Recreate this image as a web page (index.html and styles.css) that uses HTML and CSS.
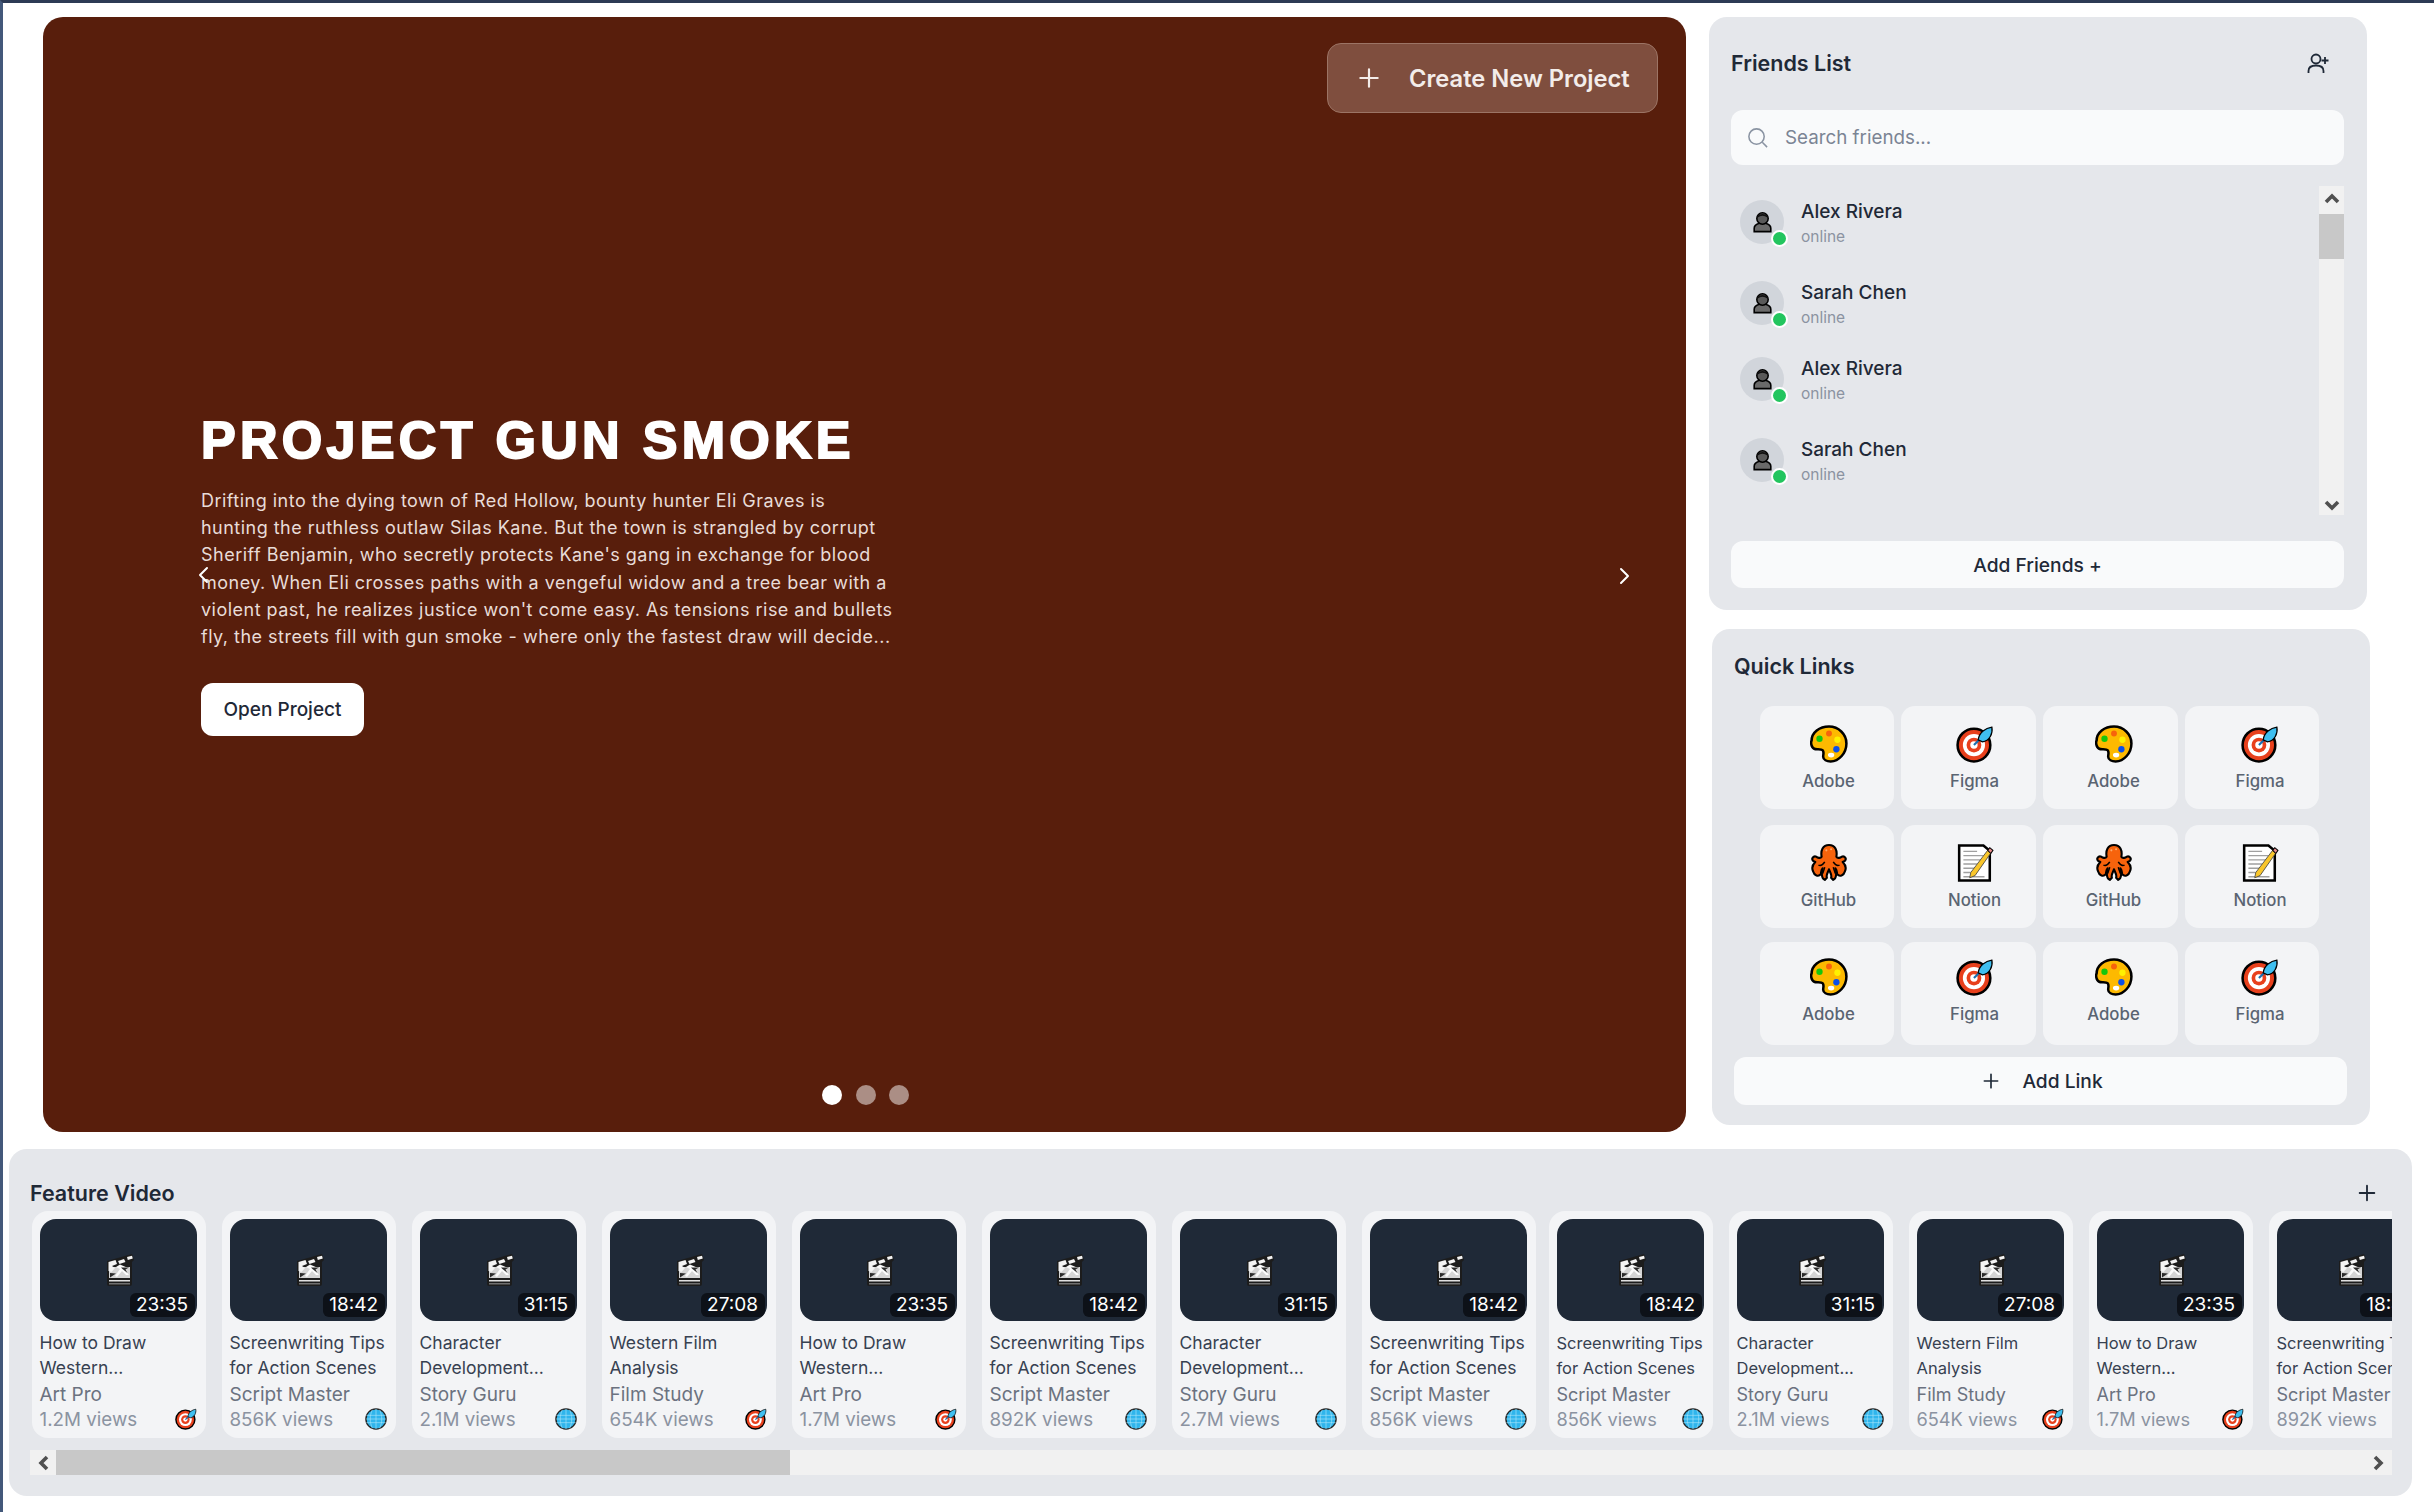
FILE: index.html
```html
<!DOCTYPE html>
<html lang="en">
<head>
  <meta charset="UTF-8" />
  <title>Dashboard</title>
  <link rel="stylesheet" href="styles.css">
</head>
<body>
  <svg class="defs" width="0" height="0">
    <symbol id="i-palette" viewBox="0 0 36 36">
      <path d="M1.500 15C1.500 7 9 1.500 18 1.500c9 0 16.500 7 16.500 16 0 9-7 17-15 17-3.500 0-7-1.500-7-4.500 0-3 1-4-.5-6-1.500-2-6-.5-8-1.500-2-1-3-3-3-7z" fill="#fdb900" stroke="#000" stroke-width="2.400"/>
      <circle cx="9" cy="13" r="3" fill="#16c60c"/><circle cx="18" cy="8" r="2.800" fill="#f7630c"/>
      <circle cx="26" cy="14" r="3" fill="#fff100"/><circle cx="25" cy="23" r="3" fill="#0c4fe8"/>
      <ellipse cx="20" cy="28.500" rx="3" ry="2.200" fill="#fff"/>
    </symbol>
    <symbol id="i-target" viewBox="0 0 36 36">
      <circle cx="17" cy="19" r="15.500" fill="#e8401c" stroke="#000" stroke-width="2.400"/>
      <circle cx="17" cy="19" r="10.500" fill="#fff"/><circle cx="17" cy="19" r="7" fill="#e8401c"/><circle cx="17" cy="19" r="3.500" fill="#fff"/>
      <path d="M17 19l6-6" stroke="#1a6fb0" stroke-width="2"/>
      <path d="M21 14c1-7 7-11 13-12 1 6-2 13-9 14z" fill="#3fbff0" stroke="#000" stroke-width="1.200"/>
    </symbol>
    <symbol id="i-octopus" viewBox="0 0 36 36">
      <g fill="#f7630c" stroke="#000" stroke-width="2" stroke-linejoin="round">
        <path d="M18 1c6 0 8 5 7 11 1 2 4 1 5 0 3-1 5 2 3 4l-2 1c2 2 4 5 2 9-1 4-5 5-7 3-1-2 0-4-2-6 1 4 2 9-2 11l-2-2c1-3-1-5-2-8-1 3-3 5-2 8l-2 2c-4-2-3-7-2-11-2 2-1 4-2 6-2 2-6 1-7-3-2-4 0-7 2-9l-2-1c-2-2 0-5 3-4 1 1 4 2 5 0-1-6 1-11 7-11z"/>
      </g>
      <path d="M8 20c2 1 4 0 6-3M28 20c-2 1-4 0-6-3M14 22l-2 6M22 22l2 6" stroke="#000" stroke-width="1.400" fill="none"/>
      <circle cx="15.500" cy="6" r="1" fill="#ffa869"/><circle cx="20" cy="5" r="1" fill="#ffa869"/>
    </symbol>
    <symbol id="i-memo" viewBox="0 0 36 36">
      <path d="M3 1.500h23l6 5v28H3z" fill="#fff" stroke="#000" stroke-width="2.400"/>
      <path d="M7 7h13M7 11h19M7 15h19M7 19h13M7 23h11M7 27h7M7 31h20" stroke="#a0a0a0" stroke-width="1.300"/>
      <path d="M14 27L30 6l3 2.500L18 30l-5 2z" fill="#f9c62b" stroke="#444" stroke-width=".8"/>
      <path d="M30 6l2-2.500 3 2.500-2 3z" fill="#e88a8a" stroke="#000" stroke-width="1"/>
    </symbol>
    <symbol id="i-clapper" viewBox="0 0 28 32">
      <path d="M1 7l25-7 2 6-2 2v22a2 2 0 0 1-2 2H3a2 2 0 0 1-2-2z" fill="#1c1c1c"/>
      <path d="M3 13h21v11H3z" fill="#d4d4d4"/>
      <path d="M3 26h21v1.500H3z" fill="#e0e0e0"/>
      <path d="M3 29h21v1.500H3z" fill="#6e6e6e"/>
      <path d="M2.500 8l7-2 1.500 4-5 2 3 2-3.500 4-3-1zM12 7l6-2 1.500 3-6 2zM21 3l5-1.300.8 2.800-5 1.500z" fill="#f4f4f4"/>
      <path d="M10 13l4-2.500 8 3.500-3 2 4 5h-3l-4-4-5 6-2-1 5-7z" fill="#fafafa"/>
      <path d="M15 13.500h8l-3.500 2 2 3.500-5-4zM4 19l6 .5-6 4z" fill="#2a2a2a"/>
    </symbol>
    <symbol id="i-globe" viewBox="0 0 24 24">
      <circle cx="12" cy="12" r="11" fill="#2fb5ec" stroke="#222" stroke-width="1.500"/>
      <path d="M1.500 8h21M1.500 12h21M1.500 16h21M8 2c-3 6-3 14 0 20M16 2c3 6 3 14 0 20M12 1v22" stroke="#a6e3f8" stroke-width=".7" fill="none"/>
    </symbol>
    <symbol id="i-person" viewBox="0 0 24 24">
      <path d="M2.500 23v-4c0-3 3-4.500 6-5.500h7c3 1 6 2.500 6 5.500v4z" fill="#6a6a6a" stroke="#000" stroke-width="1.800"/>
      <circle cx="12" cy="8" r="6.500" fill="#5a5a5a" stroke="#000" stroke-width="1.800"/>
      <path d="M6.500 6c2-3 9-3 11 0" stroke="#111" stroke-width="2" fill="none"/>
    </symbol>
    <symbol id="i-plus" viewBox="0 0 24 24">
      <path d="M12 4v16M4 12h16" stroke="currentColor" stroke-width="2" stroke-linecap="round"/>
    </symbol>
  </svg>

  <div class="top">
    <section class="hero">
      <button class="create-btn"><svg class="create-plus"><use href="#i-plus"/></svg>Create New Project</button>
      <svg class="arrow arrow-left" viewBox="0 0 24 24"><path d="M15 5l-7 7 7 7"/></svg>
      <svg class="arrow arrow-right" viewBox="0 0 24 24"><path d="M9 5l7 7-7 7"/></svg>
      <h1>PROJECT GUN SMOKE</h1>
      <p>Drifting into the dying town of Red Hollow, bounty hunter Eli Graves is<br>hunting the ruthless outlaw Silas Kane. But the town is strangled by corrupt<br>Sheriff Benjamin, who secretly protects Kane's gang in exchange for blood<br>money. When Eli crosses paths with a vengeful widow and a tree bear with a<br>violent past, he realizes justice won't come easy. As tensions rise and bullets<br>fly, the streets fill with gun smoke - where only the fastest draw will decide...</p>
      <button class="open-btn">Open Project</button>
      <div class="dots"><span class="dot active"></span><span class="dot"></span><span class="dot"></span></div>
    </section>

    <div class="side">
      <section class="friends">
        <div class="panel-head">
          <h2>Friends List</h2>
          <svg class="add-friend" viewBox="0 0 24 24"><circle cx="10" cy="8" r="4.500"/><path d="M2.500 22v-2c0-3.500 3-5.500 7.500-5.500s7.500 2 7.500 5.500v2M19 6v7M15.500 9.500h7"/></svg>
        </div>
        <div class="search">
          <svg class="search-icon" viewBox="0 0 24 24"><circle cx="11" cy="11" r="8"/><path d="M17 17l5 5"/></svg>
          <span>Search friends...</span>
        </div>
        <div class="list-wrap">
          <ul class="friend-list">
            <li class="friend f1"><div class="avatar"><svg><use href="#i-person"/></svg><span class="status"></span></div><div><div class="name">Alex Rivera</div><div class="state">online</div></div></li>
            <li class="friend f2"><div class="avatar"><svg><use href="#i-person"/></svg><span class="status"></span></div><div><div class="name">Sarah Chen</div><div class="state">online</div></div></li>
            <li class="friend f3"><div class="avatar"><svg><use href="#i-person"/></svg><span class="status"></span></div><div><div class="name">Alex Rivera</div><div class="state">online</div></div></li>
            <li class="friend f4"><div class="avatar"><svg><use href="#i-person"/></svg><span class="status"></span></div><div><div class="name">Sarah Chen</div><div class="state">online</div></div></li>
          </ul>
          <div class="vbar">
            <svg class="sb-arrow" viewBox="0 0 12 12"><path d="M2 8l4-4 4 4"/></svg>
            <div class="vthumb"></div>
            <svg class="sb-arrow sb-end" viewBox="0 0 12 12"><path d="M2 4l4 4 4-4"/></svg>
          </div>
        </div>
        <button class="wide-btn add-friends">Add Friends +</button>
      </section>

      <section class="links">
        <h2>Quick Links</h2>
        <div class="link-grid">
          <a class="link"><svg><use href="#i-palette"/></svg>Adobe</a>
          <a class="link"><svg><use href="#i-target"/></svg>Figma</a>
          <a class="link"><svg><use href="#i-palette"/></svg>Adobe</a>
          <a class="link"><svg><use href="#i-target"/></svg>Figma</a>
          <a class="link"><svg><use href="#i-octopus"/></svg>GitHub</a>
          <a class="link"><svg><use href="#i-memo"/></svg>Notion</a>
          <a class="link"><svg><use href="#i-octopus"/></svg>GitHub</a>
          <a class="link"><svg><use href="#i-memo"/></svg>Notion</a>
          <a class="link"><svg><use href="#i-palette"/></svg>Adobe</a>
          <a class="link"><svg><use href="#i-target"/></svg>Figma</a>
          <a class="link"><svg><use href="#i-palette"/></svg>Adobe</a>
          <a class="link"><svg><use href="#i-target"/></svg>Figma</a>
        </div>
        <button class="wide-btn add-link"><svg><use href="#i-plus"/></svg>Add Link</button>
      </section>
    </div>
  </div>

  <section class="feature">
    <div class="feature-head">
      <h2>Feature Video</h2>
      <svg class="feature-plus"><use href="#i-plus"/></svg>
    </div>
    <div class="videos">
      <article class="video"><div class="thumb"><svg><use href="#i-clapper"/></svg><span class="time">23:35</span></div><div class="v-title">How to Draw Western...</div><div class="v-author">Art Pro</div><div class="v-meta"><span>1.2M views</span><svg><use href="#i-target"/></svg></div></article>
      <article class="video"><div class="thumb"><svg><use href="#i-clapper"/></svg><span class="time">18:42</span></div><div class="v-title">Screenwriting Tips for Action Scenes</div><div class="v-author">Script Master</div><div class="v-meta"><span>856K views</span><svg><use href="#i-globe"/></svg></div></article>
      <article class="video"><div class="thumb"><svg><use href="#i-clapper"/></svg><span class="time">31:15</span></div><div class="v-title">Character Development...</div><div class="v-author">Story Guru</div><div class="v-meta"><span>2.1M views</span><svg><use href="#i-globe"/></svg></div></article>
      <article class="video"><div class="thumb"><svg><use href="#i-clapper"/></svg><span class="time">27:08</span></div><div class="v-title">Western Film Analysis</div><div class="v-author">Film Study</div><div class="v-meta"><span>654K views</span><svg><use href="#i-target"/></svg></div></article>
      <article class="video"><div class="thumb"><svg><use href="#i-clapper"/></svg><span class="time">23:35</span></div><div class="v-title">How to Draw Western...</div><div class="v-author">Art Pro</div><div class="v-meta"><span>1.7M views</span><svg><use href="#i-target"/></svg></div></article>
      <article class="video"><div class="thumb"><svg><use href="#i-clapper"/></svg><span class="time">18:42</span></div><div class="v-title">Screenwriting Tips for Action Scenes</div><div class="v-author">Script Master</div><div class="v-meta"><span>892K views</span><svg><use href="#i-globe"/></svg></div></article>
      <article class="video"><div class="thumb"><svg><use href="#i-clapper"/></svg><span class="time">31:15</span></div><div class="v-title">Character Development...</div><div class="v-author">Story Guru</div><div class="v-meta"><span>2.7M views</span><svg><use href="#i-globe"/></svg></div></article>
      <article class="video"><div class="thumb"><svg><use href="#i-clapper"/></svg><span class="time">18:42</span></div><div class="v-title">Screenwriting Tips for Action Scenes</div><div class="v-author">Script Master</div><div class="v-meta"><span>856K views</span><svg><use href="#i-globe"/></svg></div></article>
      <article class="video narrow"><div class="thumb"><svg><use href="#i-clapper"/></svg><span class="time">18:42</span></div><div class="v-title">Screenwriting Tips for Action Scenes</div><div class="v-author">Script Master</div><div class="v-meta"><span>856K views</span><svg><use href="#i-globe"/></svg></div></article>
      <article class="video narrow"><div class="thumb"><svg><use href="#i-clapper"/></svg><span class="time">31:15</span></div><div class="v-title">Character Development...</div><div class="v-author">Story Guru</div><div class="v-meta"><span>2.1M views</span><svg><use href="#i-globe"/></svg></div></article>
      <article class="video narrow"><div class="thumb"><svg><use href="#i-clapper"/></svg><span class="time">27:08</span></div><div class="v-title">Western Film Analysis</div><div class="v-author">Film Study</div><div class="v-meta"><span>654K views</span><svg><use href="#i-target"/></svg></div></article>
      <article class="video narrow"><div class="thumb"><svg><use href="#i-clapper"/></svg><span class="time">23:35</span></div><div class="v-title">How to Draw Western...</div><div class="v-author">Art Pro</div><div class="v-meta"><span>1.7M views</span><svg><use href="#i-target"/></svg></div></article>
      <article class="video narrow"><div class="thumb"><svg><use href="#i-clapper"/></svg><span class="time">18:42</span></div><div class="v-title">Screenwriting Tips for Action Scenes</div><div class="v-author">Script Master</div><div class="v-meta"><span>892K views</span><svg><use href="#i-globe"/></svg></div></article>
    </div>
    <div class="hbar">
      <svg class="sb-arrow" viewBox="0 0 12 12"><path d="M8 2L4 6l4 4"/></svg>
      <div class="hthumb"></div>
      <svg class="sb-arrow sb-end" viewBox="0 0 12 12"><path d="M4 2l4 4-4 4"/></svg>
    </div>
  </section>
</body>
</html>
```
FILE: styles.css
```css
* {
  box-sizing: border-box;
}
html, body {
  height: 100%;
}
body {
  margin: 0;
  background: #fff;
  border-top: 3px solid #2d3b55;
  border-left: 3px solid #43587a;
  font-family: Inter, "Liberation Sans", sans-serif;
  color: #1f2937;
  overflow: hidden;
}
.defs {
  position: absolute;
}
button {
  font-family: inherit;
  border: none;
  cursor: pointer;
}
h2 {
  margin: 0;
  font-size: 21.500px;
  font-weight: 600;
  color: #1f2937;
}

.top {
  display: flex;
  gap: 23px;
  padding: 14px 0 0 40px;
}

/* hero */
.hero {
  position: relative;
  width: 1643px;
  height: 1115px;
  flex: none;
  display: flex;
  flex-direction: column;
  align-items: flex-start;
  justify-content: center;
  padding: 0 0 4px 158px;
  background: #581e0c;
  border-radius: 20px;
  color: #fff;
}
.hero h1 {
  margin: 0 0 16px;
  font-family: "Liberation Sans", Arial, sans-serif;
  font-size: 52px;
  line-height: 62px;
  font-weight: 700;
  letter-spacing: 4.300px;
  -webkit-text-stroke: 2px #fff;
}
.hero p {
  margin: 0 0 33px;
  font-size: 18px;
  line-height: 27.2px;
  letter-spacing: .48px;
  white-space: nowrap;
  color: #e8dcd8;
}
.open-btn {
  width: 163px;
  height: 53px;
  background: #fff;
  border-radius: 12px;
  font-size: 19px;
  font-weight: 500;
  color: #1f2937;
}
.create-btn {
  position: absolute;
  top: 26px;
  right: 28px;
  width: 331px;
  height: 70px;
  display: flex;
  align-items: center;
  padding-left: 28px;
  background: #7f4e3e;
  border: 1.500px solid #9c7465;
  border-radius: 14px;
  font-size: 23.700px;
  font-weight: 600;
  color: #f3ece9;
}
.create-plus {
  width: 26px;
  height: 26px;
  margin-right: 27px;
}
.arrow {
  position: absolute;
  width: 24px;
  height: 24px;
  fill: none;
  stroke: #fff;
  stroke-width: 2;
  stroke-linecap: round;
  stroke-linejoin: round;
}
.arrow-left {
  left: 149px;
  top: 546px;
}
.arrow-right {
  right: 50px;
  top: 547px;
}
.dots {
  position: absolute;
  left: 779px;
  bottom: 27px;
  display: flex;
  gap: 13.500px;
}
.dot {
  width: 20px;
  height: 20px;
  border-radius: 50%;
  background: #ab8e85;
}
.dot.active {
  background: #fff;
}

/* right column */
.side {
  width: 661px;
  flex: none;
}
.friends {
  width: 658px;
  height: 593px;
  padding: 0 23px 0 22px;
  background: #e5e7eb;
  border-radius: 18px;
}
.panel-head {
  height: 93px;
  display: flex;
  align-items: center;
  justify-content: space-between;
  padding-bottom: 2px;
}
.add-friend {
  width: 24px;
  height: 24px;
  margin-right: 14px;
  fill: none;
  stroke: #1f2937;
  stroke-width: 1.800;
}
.search {
  height: 55px;
  display: flex;
  align-items: center;
  gap: 16px;
  padding-left: 15px;
  background: #f9fafb;
  border-radius: 12px;
  font-size: 18.800px;
  color: #7b8494;
}
.search-icon {
  width: 23px;
  height: 23px;
  fill: none;
  stroke: #8a93a2;
  stroke-width: 1.600;
}
.list-wrap {
  display: flex;
  justify-content: space-between;
  height: 329px;
  margin: 21px 0 26px;
}
.friend-list {
  list-style: none;
  margin: 0;
  padding: 0 0 0 9px;
}
.friend {
  display: flex;
  align-items: center;
  gap: 17px;
  height: 44px;
}
.f1 { margin-top: 14px; }
.f2 { margin-top: 37px; }
.f3 { margin-top: 32px; }
.f4 { margin-top: 37px; }
.avatar {
  position: relative;
  width: 44px;
  height: 44px;
  display: flex;
  align-items: center;
  justify-content: center;
  background: #d1d5db;
  border-radius: 50%;
}
.avatar svg {
  width: 21px;
  height: 22px;
}
.status {
  position: absolute;
  right: -4px;
  bottom: -3px;
  width: 17px;
  height: 17px;
  background: #22c55e;
  border: 2px solid #fff;
  border-radius: 50%;
}
.name {
  margin-top: 1.500px;
  font-size: 19px;
  line-height: 26px;
  font-weight: 500;
  color: #1f2937;
}
.state {
  margin-top: 2px;
  font-size: 15.500px;
  line-height: 20px;
  color: #8b93a1;
}
.vbar {
  width: 25px;
  display: flex;
  flex-direction: column;
  align-items: center;
  background: #f1f1f1;
}
.sb-arrow {
  width: 18px;
  height: 18px;
  margin: 4px 0;
  flex: none;
  fill: none;
  stroke: #505050;
  stroke-width: 2.400;
}
.sb-end {
  margin-top: auto;
  margin-bottom: 1px;
}
.vthumb {
  width: 25px;
  height: 45px;
  margin-top: 2px;
  background: #c8c8c8;
}
.wide-btn {
  display: flex;
  align-items: center;
  justify-content: center;
  width: 613px;
  background: #f9fafb;
  border-radius: 12px;
  font-size: 19.200px;
  font-weight: 500;
  color: #1f2937;
}
.add-friends {
  height: 47px;
}

.links {
  width: 658px;
  height: 496px;
  margin: 19px 0 0 3px;
  padding: 0 22px;
  background: #e5e7eb;
  border-radius: 18px;
}
.links h2 {
  height: 77px;
  line-height: 75px;
}
.link-grid {
  display: grid;
  grid-template-columns: 134px 135px 135px 134px;
  grid-template-rows: 103px 103px 103px;
  column-gap: 7px;
  row-gap: 16px;
  margin-left: 26px;
}
.link {
  display: flex;
  flex-direction: column;
  align-items: center;
  padding-top: 19px;
  background: #f3f4f6;
  border-radius: 14px;
  font-size: 16.800px;
  font-weight: 500;
  color: #5a6472;
}
/* labels sit a bit right of the card centre, more so in the even columns */
.link:nth-child(4n+1) { padding-left: 3px; }
.link:nth-child(4n+2) { padding-left: 12px; }
.link:nth-child(4n+3) { padding-left: 6px; }
.link:nth-child(4n) { padding-left: 16px; }
.link:nth-child(n+9) {
  margin: -2px 0 2px;
  padding-top: 16px;
}
.link svg {
  width: 38px;
  height: 38px;
  margin-bottom: 8px;
}
.add-link {
  height: 48px;
  margin-top: 10px;
  padding-left: 9px;
}
.add-link svg {
  width: 20px;
  height: 20px;
  margin-right: 21px;
}

/* feature videos */
.feature {
  width: 2403px;
  height: 347px;
  margin: 17px 0 0 6px;
  padding: 0 20px 0 21px;
  background: #e5e7eb;
  border-radius: 18px;
}
.feature-head {
  height: 62px;
  display: flex;
  align-items: flex-end;
  justify-content: space-between;
  padding-bottom: 5px;
}
.feature-plus {
  width: 22px;
  height: 22px;
  margin-right: 14px;
  margin-bottom: 2px;
}
.videos {
  display: flex;
  gap: 16px;
  height: 227px;
  margin-left: 2px;
  overflow: hidden;
}
.video {
  width: 174px;
  height: 227px;
  flex: none;
  padding: 8px 9px 0 7.500px;
  background: #f3f4f6;
  border-radius: 16px;
}
.video.narrow {
  width: 164px;
}
.video.narrow:nth-child(9) {
  margin-left: -3px;
}
.thumb {
  position: relative;
  height: 102px;
  display: flex;
  align-items: center;
  justify-content: center;
  background: #1f2937;
  border-radius: 16px;
}
.thumb svg {
  width: 28px;
  height: 32px;
  margin-left: 3px;
}
.time {
  position: absolute;
  right: 2px;
  bottom: 4px;
  padding: 0 7px 0 6px;
  height: 24px;
  line-height: 24px;
  background: #0d1118;
  border-radius: 6px;
  font-size: 19px;
  color: #fff;
}
.v-title {
  margin-top: 10px;
  font-size: 17.500px;
  line-height: 24.500px;
  color: #374151;
}
.v-author {
  margin-top: 2px;
  font-size: 19px;
  line-height: 25px;
  color: #6b7280;
}
.v-meta {
  display: flex;
  align-items: center;
  justify-content: space-between;
  height: 24px;
  font-size: 18.800px;
  color: #8b93a1;
}
.v-meta svg {
  width: 22px;
  height: 22px;
}
.narrow .v-title {
  font-size: 16.500px;
}
.narrow .v-author {
  font-size: 18px;
}
.narrow .v-meta {
  font-size: 18.200px;
}
.hbar {
  display: flex;
  align-items: center;
  width: 2362px;
  height: 25px;
  margin-top: 12px;
  background: #f1f1f1;
}
.hbar .sb-arrow {
  margin: 0 0 0 5px;
}
.hbar .sb-end {
  margin-left: auto;
  margin-right: 5px;
}
.hthumb {
  width: 734px;
  height: 25px;
  margin-left: 3px;
  background: #c8c8c8;
}
```
